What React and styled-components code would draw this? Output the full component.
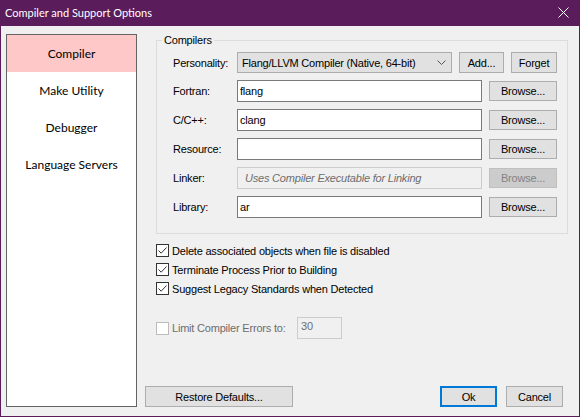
import styled, { createGlobalStyle } from 'styled-components'

const GlobalStyle = createGlobalStyle`
  html, body {
    margin: 0;
    padding: 0;
    background: #f0f0f0;
  }
  * {
    box-sizing: border-box;
  }
`

const ui = `'Liberation Sans', Arial, sans-serif`
const segoe = `Lato, 'Noto Sans', sans-serif`

const Window = styled.div`
  width: 580px;
  height: 417px;
  border: 1px solid #5a1c5a;
  border-top: none;
  background: #f0f0f0;
  display: flex;
  flex-direction: column;
  font-family: ${ui};
  font-size: 11px;
  letter-spacing: -0.2px;
  color: #000;
`

const TitleBar = styled.div`
  height: 26px;
  flex: none;
  background: #5a1c5a;
  color: #fff;
  display: flex;
  align-items: center;
  justify-content: space-between;
  padding: 0 10px 1px 4px;
  font-family: ${segoe};
  font-size: 11px;
  letter-spacing: 0;
`

const Body = styled.div`
  flex: 1;
  display: flex;
  padding: 8px 0 9px 5px;
`

const Nav = styled.div`
  width: 131px;
  flex: none;
  border: 1px solid #646464;
  background: #fff;
  display: flex;
  flex-direction: column;
`

const NavItem = styled.div`
  height: 37px;
  display: flex;
  align-items: center;
  justify-content: center;
  font-family: ${segoe};
  font-size: 12px;
  letter-spacing: 0;
  background: ${({ active }) => (active ? '#ffc8c8' : 'transparent')};
`

const Right = styled.div`
  width: 423px;
  margin-left: 8px;
  display: flex;
  flex-direction: column;
`

const Group = styled.fieldset`
  margin: 0 0 0 11px;
  padding: 5px 10px 15px 16px;
  border: 1px solid #dcdcdc;
  min-width: 0;
  display: flex;
  flex-direction: column;
  gap: 7px;
`

const Legend = styled.legend`
  margin-left: -11px;
  padding: 0 2px;
  line-height: 13px;
`

const Row = styled.div`
  display: flex;
  align-items: center;
  gap: 7px;
  height: ${({ h }) => h || 22}px;
`

const Label = styled.span`
  width: 57px;
  flex: none;
`

const TextBox = styled.div`
  width: 245px;
  height: 22px;
  border: 1px solid ${({ disabled }) => (disabled ? '#cccccc' : '#7a7a7a')};
  background: ${({ disabled }) => (disabled ? '#f0f0f0' : '#fff')};
  display: flex;
  align-items: center;
  color: ${({ disabled }) => (disabled ? '#6d6d6d' : '#000')};
  font-style: ${({ italic }) => (italic ? 'italic' : 'normal')};
  padding-left: ${({ italic }) => (italic ? '7px' : '2px')};
`

const Select = styled.div`
  width: 215px;
  height: 21px;
  border: 1px solid #adadad;
  background: #e1e1e1;
  display: flex;
  align-items: center;
  justify-content: space-between;
  padding: 0 5px 0 4px;
`

const Button = styled.div`
  width: ${({ w }) => w}px;
  height: ${({ h }) => h || 20}px;
  flex: none;
  display: flex;
  align-items: center;
  justify-content: center;
  background: ${({ disabled }) => (disabled ? '#cccccc' : '#e1e1e1')};
  border: ${({ primary, disabled }) =>
    primary
      ? '2px solid #0078d7'
      : `1px solid ${disabled ? '#bfbfbf' : '#adadad'}`};
  color: ${({ disabled }) => (disabled ? '#838383' : '#000')};
`

const Checks = styled.div`
  margin: 7px 0 0 11px;
  display: flex;
  flex-direction: column;
`

const CheckRow = styled.div`
  height: 19px;
  display: flex;
  align-items: center;
  gap: 3px;
`

const Box = styled.span`
  width: 13px;
  height: 13px;
  flex: none;
  border: 1px solid ${({ disabled }) => (disabled ? '#bcbcbc' : '#333')};
  background: #fff;
  display: flex;
  align-items: center;
  justify-content: center;
`

const LimitRow = styled.div`
  margin: 19px 0 0 11px;
  height: 22px;
  display: flex;
  align-items: center;
  color: #6d6d6d;
`

const LimitLabel = styled.span`
  width: 125px;
  margin-left: 3px;
`

const SmallBox = styled.div`
  width: 45px;
  height: 22px;
  border: 1px solid #cccccc;
  background: #f0f0f0;
  padding: 2px 0 0 3px;
  color: #6d6d6d;
`

const Footer = styled.div`
  margin-top: auto;
  display: flex;
  justify-content: space-between;
  padding-right: 5px;
`

const ButtonGroup = styled.div`
  display: flex;
  gap: 9px;
`

function Check({ checked, children }) {
  return (
    <CheckRow>
      <Box>
        {checked && (
          <svg width="11" height="11" viewBox="0 0 11 11">
            <path d="M1.5 5.5 L4.2 8.2 L9.5 2.5" fill="none" stroke="#333" strokeWidth="1" />
          </svg>
        )}
      </Box>
      {children}
    </CheckRow>
  )
}

function PathRow({ label, value, disabled, italic }) {
  return (
    <Row>
      <Label>{label}</Label>
      <TextBox disabled={disabled} italic={italic}>{value}</TextBox>
      <Button w={68} disabled={disabled}>Browse...</Button>
    </Row>
  )
}

const navItems = ['Compiler', 'Make Utility', 'Debugger', 'Language Servers']

export default function App() {
  return (
    <>
      <GlobalStyle />
      <Window>
        <TitleBar>
          <span>Compiler and Support Options</span>
          <svg width="11" height="11" viewBox="0 0 11 11">
            <path d="M0.5 0.5 L10.5 10.5 M10.5 0.5 L0.5 10.5" stroke="#fff" strokeWidth="1" />
          </svg>
        </TitleBar>
        <Body>
          <Nav>
            {navItems.map((item, i) => (
              <NavItem key={item} active={i === 0}>{item}</NavItem>
            ))}
          </Nav>
          <Right>
            <Group>
              <Legend>Compilers</Legend>
              <Row h={21}>
                <Label>Personality:</Label>
                <Select>
                  <span>Flang/LLVM Compiler (Native, 64-bit)</span>
                  <svg width="9" height="5" viewBox="0 0 9 5">
                    <path d="M0.5 0.5 L4.5 4.5 L8.5 0.5" fill="none" stroke="#555" strokeWidth="1" />
                  </svg>
                </Select>
                <Button w={45} h={21}>Add...</Button>
                <Button w={46} h={21}>Forget</Button>
              </Row>
              <PathRow label="Fortran:" value="flang" />
              <PathRow label="C/C++:" value="clang" />
              <PathRow label="Resource:" value="" />
              <PathRow label="Linker:" value="Uses Compiler Executable for Linking" disabled italic />
              <PathRow label="Library:" value="ar" />
            </Group>
            <Checks>
              <Check checked>Delete associated objects when file is disabled</Check>
              <Check checked>Terminate Process Prior to Building</Check>
              <Check checked>Suggest Legacy Standards when Detected</Check>
            </Checks>
            <LimitRow>
              <Box disabled />
              <LimitLabel>Limit Compiler Errors to:</LimitLabel>
              <SmallBox>30</SmallBox>
            </LimitRow>
            <Footer>
              <Button w={148} h={21}>Restore Defaults...</Button>
              <ButtonGroup>
                <Button w={57} h={21} primary>Ok</Button>
                <Button w={57} h={21}>Cancel</Button>
              </ButtonGroup>
            </Footer>
          </Right>
        </Body>
      </Window>
    </>
  )
}
